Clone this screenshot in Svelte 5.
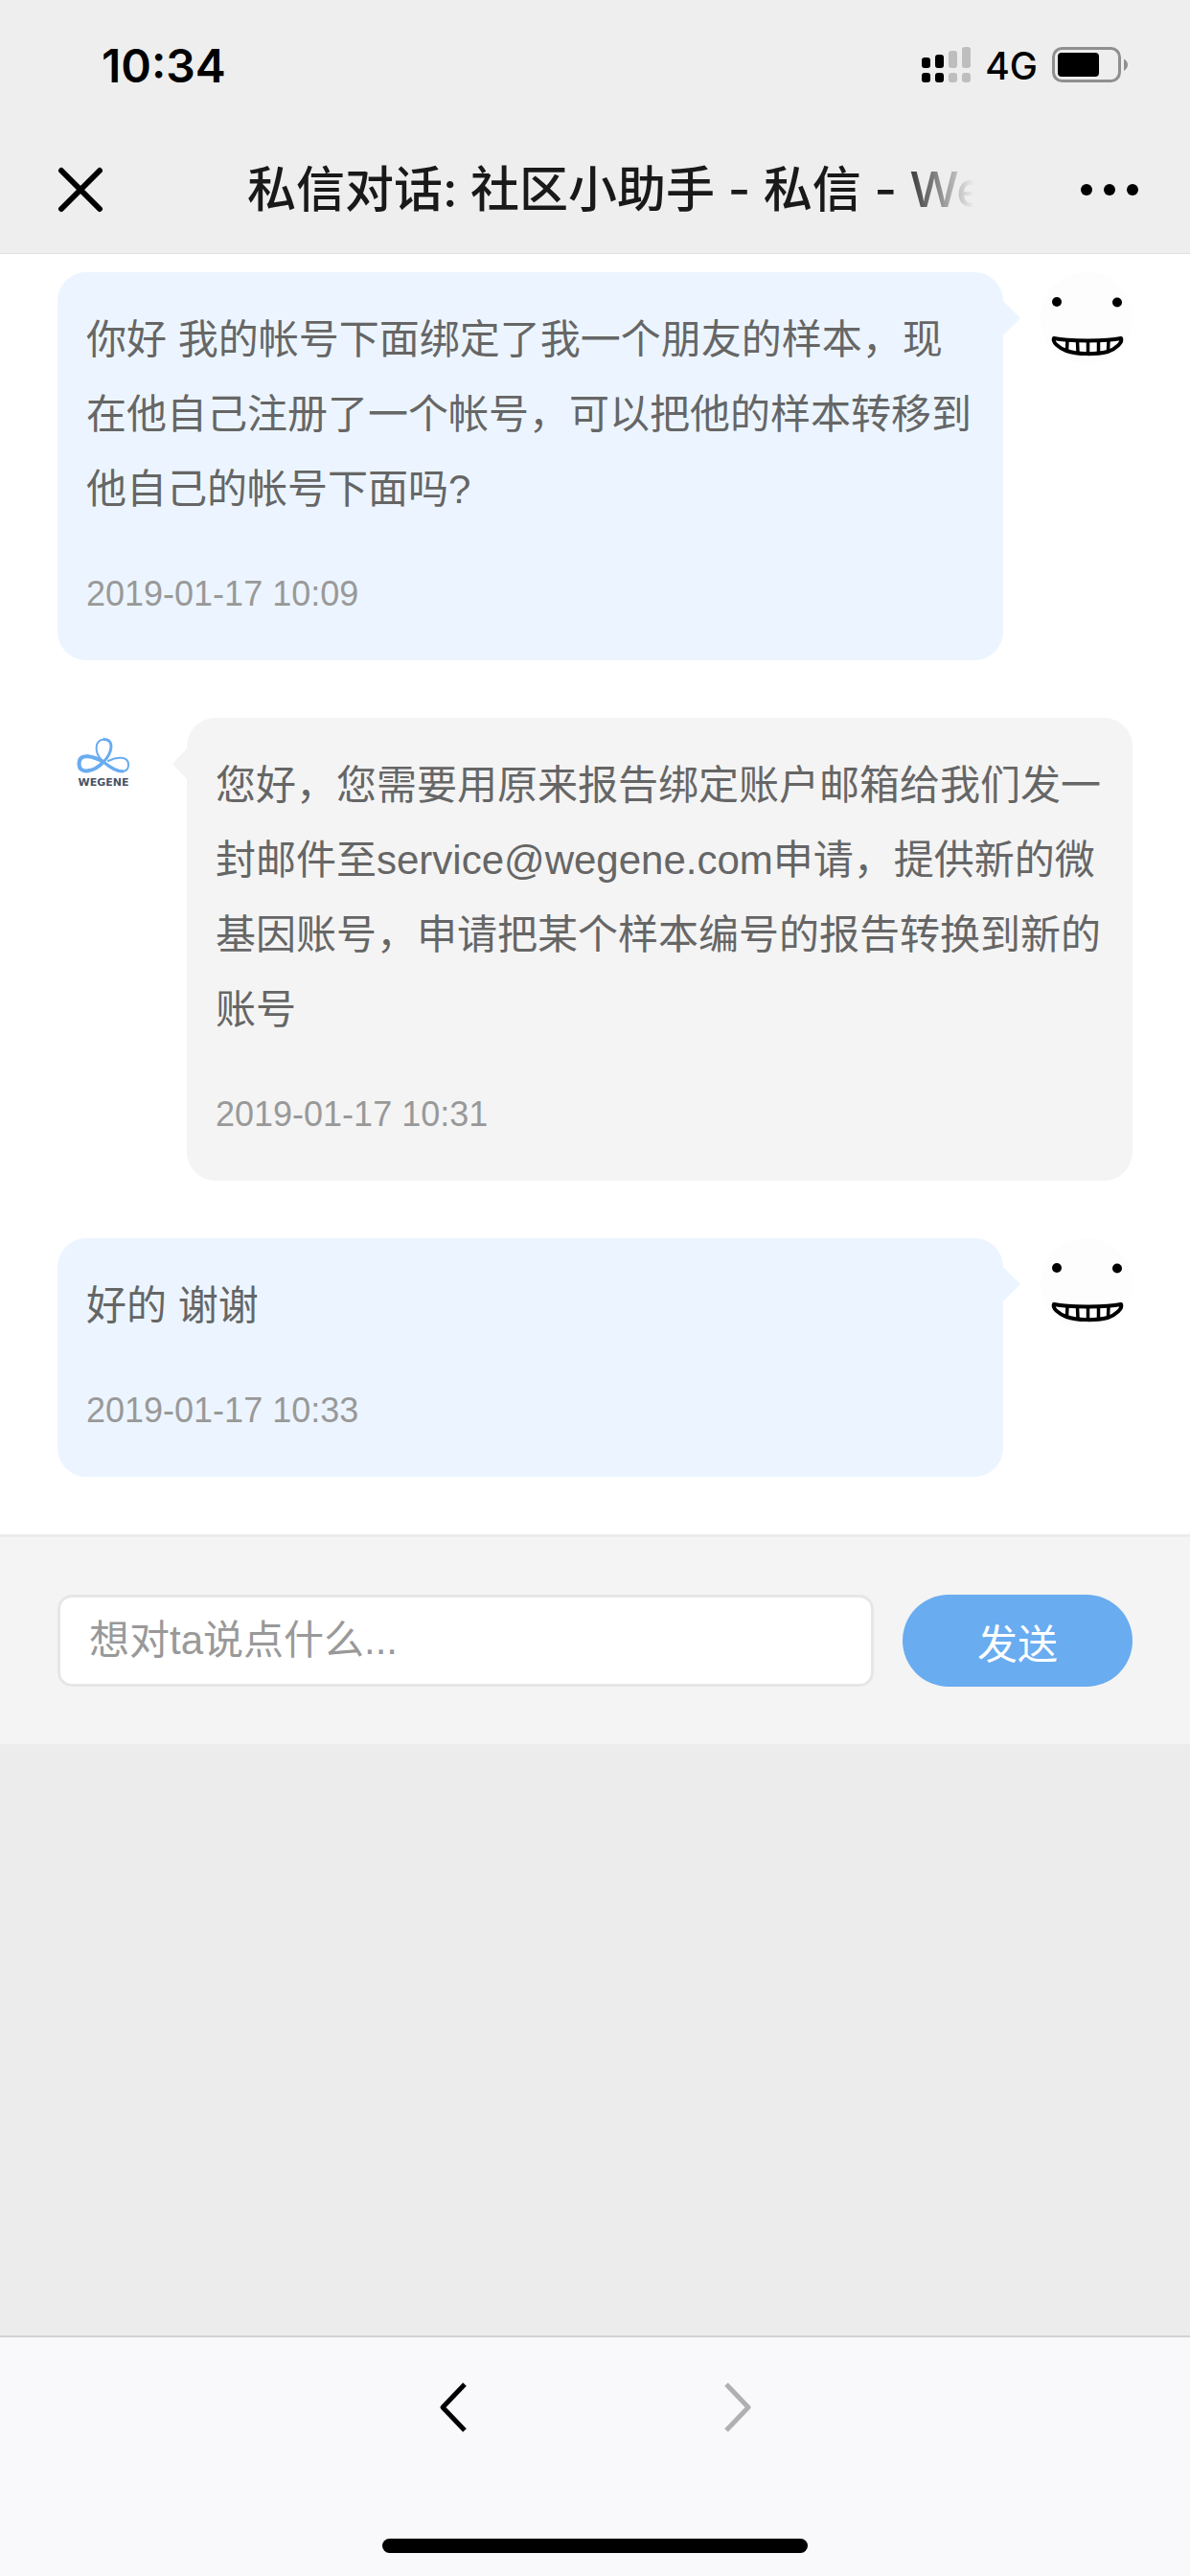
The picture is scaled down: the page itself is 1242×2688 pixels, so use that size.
<script>
  let draft = $state('');
  let messages = $state([
    { id: 1, mine: true, text: '你好 我的帐号下面绑定了我一个朋友的样本，现在他自己注册了一个帐号，可以把他的样本转移到他自己的帐号下面吗?', time: '2019-01-17 10:09' },
    { id: 2, mine: false, text: '您好，您需要用原来报告绑定账户邮箱给我们发一封邮件至service@wegene.com申请，提供新的微基因账号，申请把某个样本编号的报告转换到新的账号', time: '2019-01-17 10:31' },
    { id: 3, mine: true, text: '好的 谢谢', time: '2019-01-17 10:33' }
  ]);

  function pad(n) {
    return String(n).padStart(2, '0');
  }

  function send(e) {
    e.preventDefault();
    const text = draft.trim();
    if (!text) return;
    const d = new Date();
    const time = `${d.getFullYear()}-${pad(d.getMonth() + 1)}-${pad(d.getDate())} ${pad(d.getHours())}:${pad(d.getMinutes())}`;
    messages.push({ id: messages.length + 1, mine: true, text, time });
    draft = '';
  }
</script>

<div class="page">
  <header>
    <div class="status">
      <span class="clock">10:34</span>
      <div class="status-right">
        <svg width="51" height="38" viewBox="0 0 51 38" aria-hidden="true">
          <rect x="0" y="11" width="9" height="11" rx="3" />
          <rect x="14" y="8" width="9" height="14" rx="3" />
          <rect x="28" y="4" width="9" height="18" rx="3" fill="#bebebe" />
          <rect x="42" y="0" width="9" height="22" rx="3" fill="#bebebe" />
          <rect x="0" y="27" width="9" height="10" rx="3" />
          <rect x="14" y="27" width="9" height="10" rx="3" />
          <rect x="28" y="27" width="9" height="10" rx="3" fill="#bebebe" />
          <rect x="42" y="27" width="9" height="10" rx="3" fill="#bebebe" />
        </svg>
        <span class="network">4G</span>
        <svg width="80" height="38" viewBox="0 0 80 38" aria-hidden="true">
          <rect x="1.5" y="1.5" width="69" height="34" rx="9" fill="none" stroke="#8f8f8f" stroke-width="3" />
          <rect x="6" y="6" width="43" height="25" rx="4" />
          <path d="M75 12.500Q79 15 79 18.500T75 25Z" fill="#8f8f8f" />
        </svg>
      </div>
    </div>
    <div class="titlebar">
      <button type="button" class="icon-button" aria-label="关闭">
        <svg width="48" height="48" viewBox="0 0 48 48">
          <path d="M4 4L44 44M44 4L4 44" fill="none" stroke="#000" stroke-width="6" stroke-linecap="round" />
        </svg>
      </button>
      <h1>私信对话: 社区小助手 - 私信 - We</h1>
      <button type="button" class="icon-button" aria-label="更多">
        <svg width="60" height="48" viewBox="0 0 60 48">
          <circle cx="6" cy="24" r="6" />
          <circle cx="30" cy="24" r="6" />
          <circle cx="54" cy="24" r="6" />
        </svg>
      </button>
    </div>
  </header>

  <main>
    {#each messages as message (message.id)}
      <article class="message" class:mine={message.mine}>
        {#if message.mine}
          <svg class="avatar" viewBox="0 0 96 96" aria-hidden="true">
            <circle cx="48" cy="48" r="48" fill="#fdfdfd" />
            <circle cx="17" cy="31" r="5" />
            <circle cx="80" cy="31.500" r="5" />
            <path d="M14 69C28 72 68 72.500 84 69C86 73 79 80 70 83C58 86 38 86 27 82C19 79 12 73 14 69Z" fill="#fff" stroke="#000" stroke-width="4" stroke-linejoin="round" />
            <path d="M28 71L27.500 82M38.500 72L39 84M49.500 72V85M60.500 72V84M71 71L70.500 82" fill="none" stroke="#000" stroke-width="3.500" />
          </svg>
        {:else}
          <svg class="avatar" viewBox="0 0 96 96" aria-hidden="true">
            <g fill="none" stroke="#69acf0" stroke-linecap="round">
              <path d="M48.500 22.500C39 23 38 36 46 44" stroke-width="2" />
              <path d="M48 46C57 37 60 22.500 48.500 22.500" stroke-width="3" />
              <path d="M48 46C39 41 22.500 35 22.500 48C22.500 60 39 56 48 46" stroke-width="4" />
              <path d="M48 46C57 53 74 62 74 49C74 39 61 41 53 45" stroke-width="2" />
              <path d="M48 46C56 53 64 56 68 56" stroke-width="3" />
            </g>
            <text class="wordmark" x="48" y="71" text-anchor="middle">WEGENE</text>
          </svg>
        {/if}
        <div class="bubble">
          <p>{message.text}</p>
          <time>{message.time}</time>
        </div>
      </article>
    {/each}
  </main>

  <form onsubmit={send}>
    <input type="text" aria-label="私信内容" placeholder="想对ta说点什么..." bind:value={draft} />
    <button type="submit">发送</button>
  </form>

  <footer>
    <nav>
      <button type="button" aria-label="后退">
        <svg width="30" height="54" viewBox="0 0 30 54">
          <path d="M27 3L4 27L27 51" fill="none" stroke="#000" stroke-width="5" stroke-linejoin="round" />
        </svg>
      </button>
      <button type="button" aria-label="前进" disabled>
        <svg width="30" height="54" viewBox="0 0 30 54">
          <path d="M3 3L26 27L3 51" fill="none" stroke="#b0b0b0" stroke-width="5" stroke-linejoin="round" />
        </svg>
      </button>
    </nav>
    <div class="home-bar"></div>
  </footer>
</div>

<style>
  :global(body) {
    background: #ececec;
  }
  .page {
    display: flex;
    flex-direction: column;
    min-height: 100vh;
    font-family: "Liberation Sans", "Noto Sans CJK SC", sans-serif;
    color: #666;
  }
  svg {
    display: block;
    flex: none;
  }
  button {
    padding: 0;
    border: none;
    background: none;
    font-family: inherit;
    cursor: pointer;
  }
  header {
    padding-bottom: 4px;
    background: #eee;
    border-bottom: 1px solid #e0e0e0;
    color: #000;
  }
  .status {
    display: flex;
    align-items: center;
    justify-content: space-between;
    height: 136px;
    padding: 0 64px 0 106px;
    font-family: Inter, sans-serif;
  }
  .clock {
    font-size: 48px;
    font-weight: 600;
  }
  .status-right {
    display: flex;
    align-items: center;
    gap: 15px;
  }
  .network {
    font-size: 39px;
    font-weight: 500;
  }
  .titlebar {
    display: flex;
    align-items: center;
    justify-content: space-between;
    height: 124px;
    padding: 0 54px 0 60px;
  }
  .icon-button {
    display: flex;
    align-items: center;
    height: 96px;
  }
  h1 {
    flex: 1;
    margin: 0 80px 0 150px;
    overflow: hidden;
    white-space: nowrap;
    font-family: Inter, "Noto Sans CJK SC", sans-serif;
    font-size: 51px;
    font-weight: 500;
    line-height: 78px;
    color: #191919;
    mask-image: linear-gradient(to right, #000 86%, transparent 96%);
  }
  main {
    display: flex;
    flex-direction: column;
    gap: 60px;
    padding: 19px 60px 60px;
    background: #fff;
  }
  .message {
    display: flex;
    align-items: flex-start;
    gap: 39px;
  }
  .mine {
    flex-direction: row-reverse;
  }
  .avatar {
    width: 96px;
    height: 96px;
  }
  .wordmark {
    font-family: "DejaVu Sans", sans-serif;
    font-size: 11px;
    font-weight: 700;
    fill: #4a5264;
  }
  .bubble {
    position: relative;
    flex: 1;
    padding: 32px 30px 30px;
    border-radius: 30px;
    background: #f4f4f4;
  }
  .bubble::before {
    content: '';
    position: absolute;
    top: 32px;
    left: -15px;
    border: 16px solid transparent;
    border-left: none;
    border-right: 15px solid #f4f4f4;
  }
  .mine .bubble {
    background: #ecf5ff;
  }
  .mine .bubble::before {
    top: 30px;
    left: 100%;
    border: 18px solid transparent;
    border-right: none;
    border-left-color: #ecf5ff;
  }
  .bubble p {
    margin: 0 0 31px;
    font-size: 42px;
    line-height: 78px;
  }
  time {
    display: block;
    font-size: 36px;
    line-height: 78px;
    color: #999;
  }
  form {
    display: flex;
    gap: 30px;
    padding: 60px;
    border-top: 3px solid #ececec;
    background: #f4f4f4;
  }
  input {
    flex: 1;
    min-width: 0;
    height: 96px;
    padding: 0 30px;
    box-sizing: border-box;
    border: 3px solid #e6e6e6;
    border-radius: 15px;
    background: #fff;
    font-family: inherit;
    font-size: 42px;
    color: #666;
  }
  input::placeholder {
    color: #999;
    opacity: 1;
  }
  form button {
    width: 240px;
    height: 96px;
    border-radius: 48px;
    background: #69acf0;
    font-size: 42px;
    color: #fff;
  }
  footer {
    margin-top: auto;
    padding-bottom: 24px;
    border-top: 2px solid #d2d2d4;
    background: #f9f9fc;
  }
  nav {
    display: flex;
    justify-content: center;
  }
  nav button {
    display: flex;
    align-items: center;
    justify-content: center;
    width: 297px;
    height: 146px;
  }
  .home-bar {
    width: 444px;
    height: 15px;
    margin: 64px auto 0;
    border-radius: 8px;
    background: #000;
  }
</style>
